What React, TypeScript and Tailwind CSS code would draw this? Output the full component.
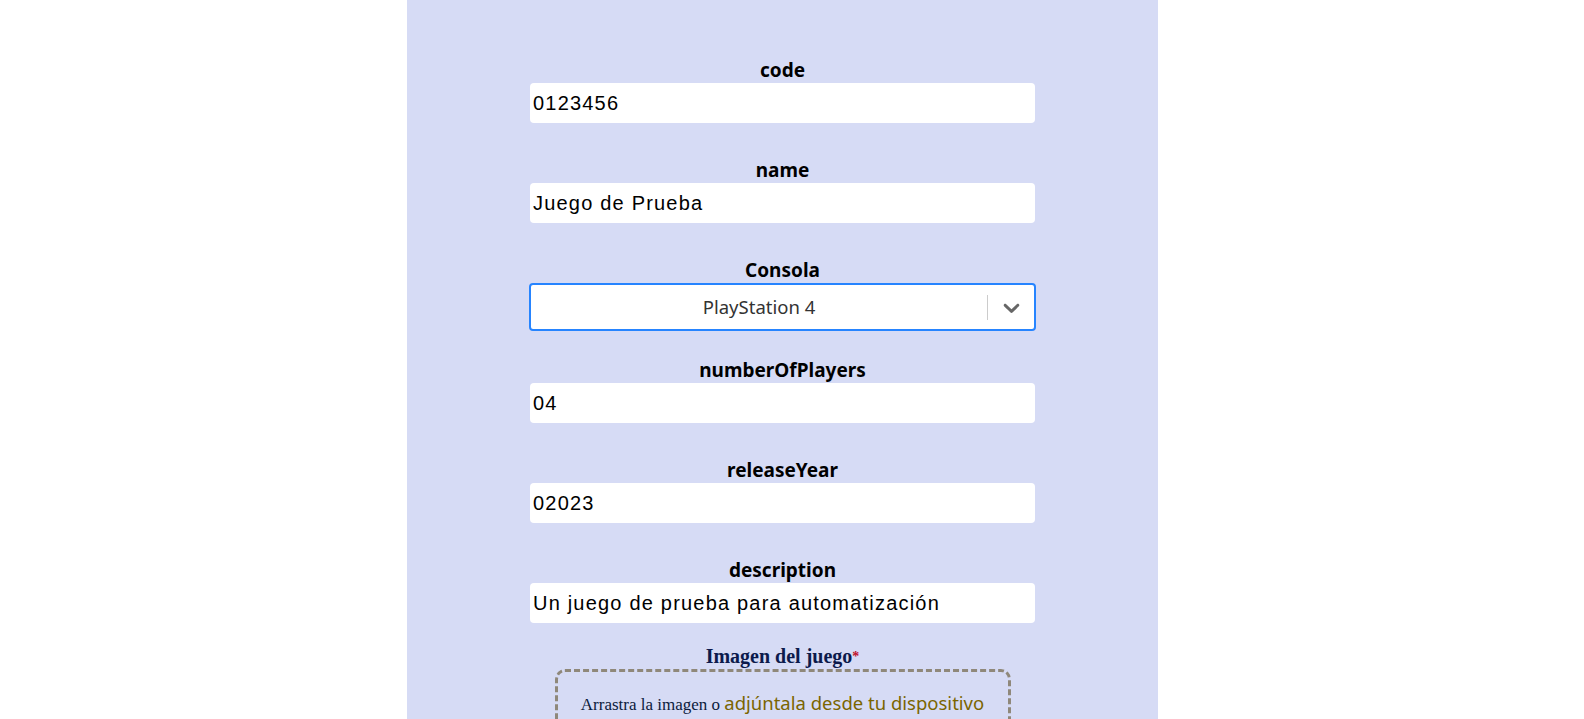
import { useEffect, useRef } from "react";

const fields = [
  { label: "code", value: "0123456" },
  { label: "name", value: "Juego de Prueba" },
];

const fields2 = [
  { label: "numberOfPlayers", value: "04" },
  { label: "releaseYear", value: "02023" },
  { label: "description", value: "Un juego de prueba para automatización" },
];

function Field({ label, value, last }: { label: string; value: string; last?: boolean }) {
  return (
    <div className={last ? "flex flex-col items-center mb-[21px]" : "flex flex-col items-center mb-[35px]"}>
      <label className="h-[25px] leading-[25px] text-[19px] font-bold text-black font-['Noto_Sans',sans-serif]">
        {label}
      </label>
      <input
        readOnly
        value={value}
        className="w-[505px] h-10 px-[3px] bg-white rounded-[4px] text-[20px] tracking-[1.2px] text-black font-['Liberation_Sans',Arial,sans-serif] outline-none"
      />
    </div>
  );
}

export default function App() {
  const scroller = useRef<HTMLDivElement>(null);

  useEffect(() => {
    if (scroller.current) scroller.current.scrollTop = 186;
  }, []);

  return (
    <div ref={scroller} className="h-screen overflow-y-scroll bg-white">
      <div className="ml-[407px] w-[751px] min-h-[1090px] bg-[#d6dbf5] flex flex-col items-center pt-[244px] pb-[100px]">
        {fields.map((f) => (
          <Field key={f.label} label={f.label} value={f.value} />
        ))}

        <div className="flex flex-col items-center mb-[27px]">
          <label className="h-[25px] leading-[25px] text-[19px] font-bold text-black font-['Noto_Sans',sans-serif]">
            Consola
          </label>
          <div className="w-[507px] h-12 flex items-center bg-white border-2 border-[#2684ff] rounded-[4px]">
            <div className="flex-1 text-center text-[18.5px] text-[#333] font-['Noto_Sans',sans-serif]">
              PlayStation 4
            </div>
            <span className="w-px h-[25px] bg-[#ccc]" />
            <div className="w-[46px] flex justify-center text-[#666]">
              <svg width="27" height="27" viewBox="0 0 20 20" fill="currentColor">
                <path d="M4.516 7.548c0.436-0.446 1.043-0.481 1.576 0l3.908 3.747 3.908-3.747c0.533-0.481 1.141-0.446 1.574 0 0.436 0.445 0.408 1.197 0 1.615-0.406 0.418-4.695 4.502-4.695 4.502-0.217 0.223-0.502 0.335-0.787 0.335s-0.57-0.112-0.789-0.335c0 0-4.287-4.084-4.695-4.502s-0.436-1.17 0-1.615z" />
              </svg>
            </div>
          </div>
        </div>

        {fields2.map((f, i) => (
          <Field key={f.label} label={f.label} value={f.value} last={i === fields2.length - 1} />
        ))}

        <div className="flex flex-col items-center">
          <label className="h-[25px] leading-[25px] text-[20px] font-bold text-[#0c1a4c] font-['Liberation_Serif',serif]">
            Imagen del juego<span className="text-[14px] text-[#c0102a] align-top">*</span>
          </label>
          <div className="w-[456px] h-[120px] border-[3px] border-dashed border-[#8f887a] rounded-[10px] pt-[17px] text-center">
            <span className="text-[17px] text-[#0c1a3c] font-['Liberation_Serif',serif]">Arrastra la imagen o </span>
            <span className="text-[18.5px] text-[#7a6500] font-['Noto_Sans',sans-serif]">adjúntala desde tu dispositivo</span>
          </div>
        </div>
      </div>
    </div>
  );
}
